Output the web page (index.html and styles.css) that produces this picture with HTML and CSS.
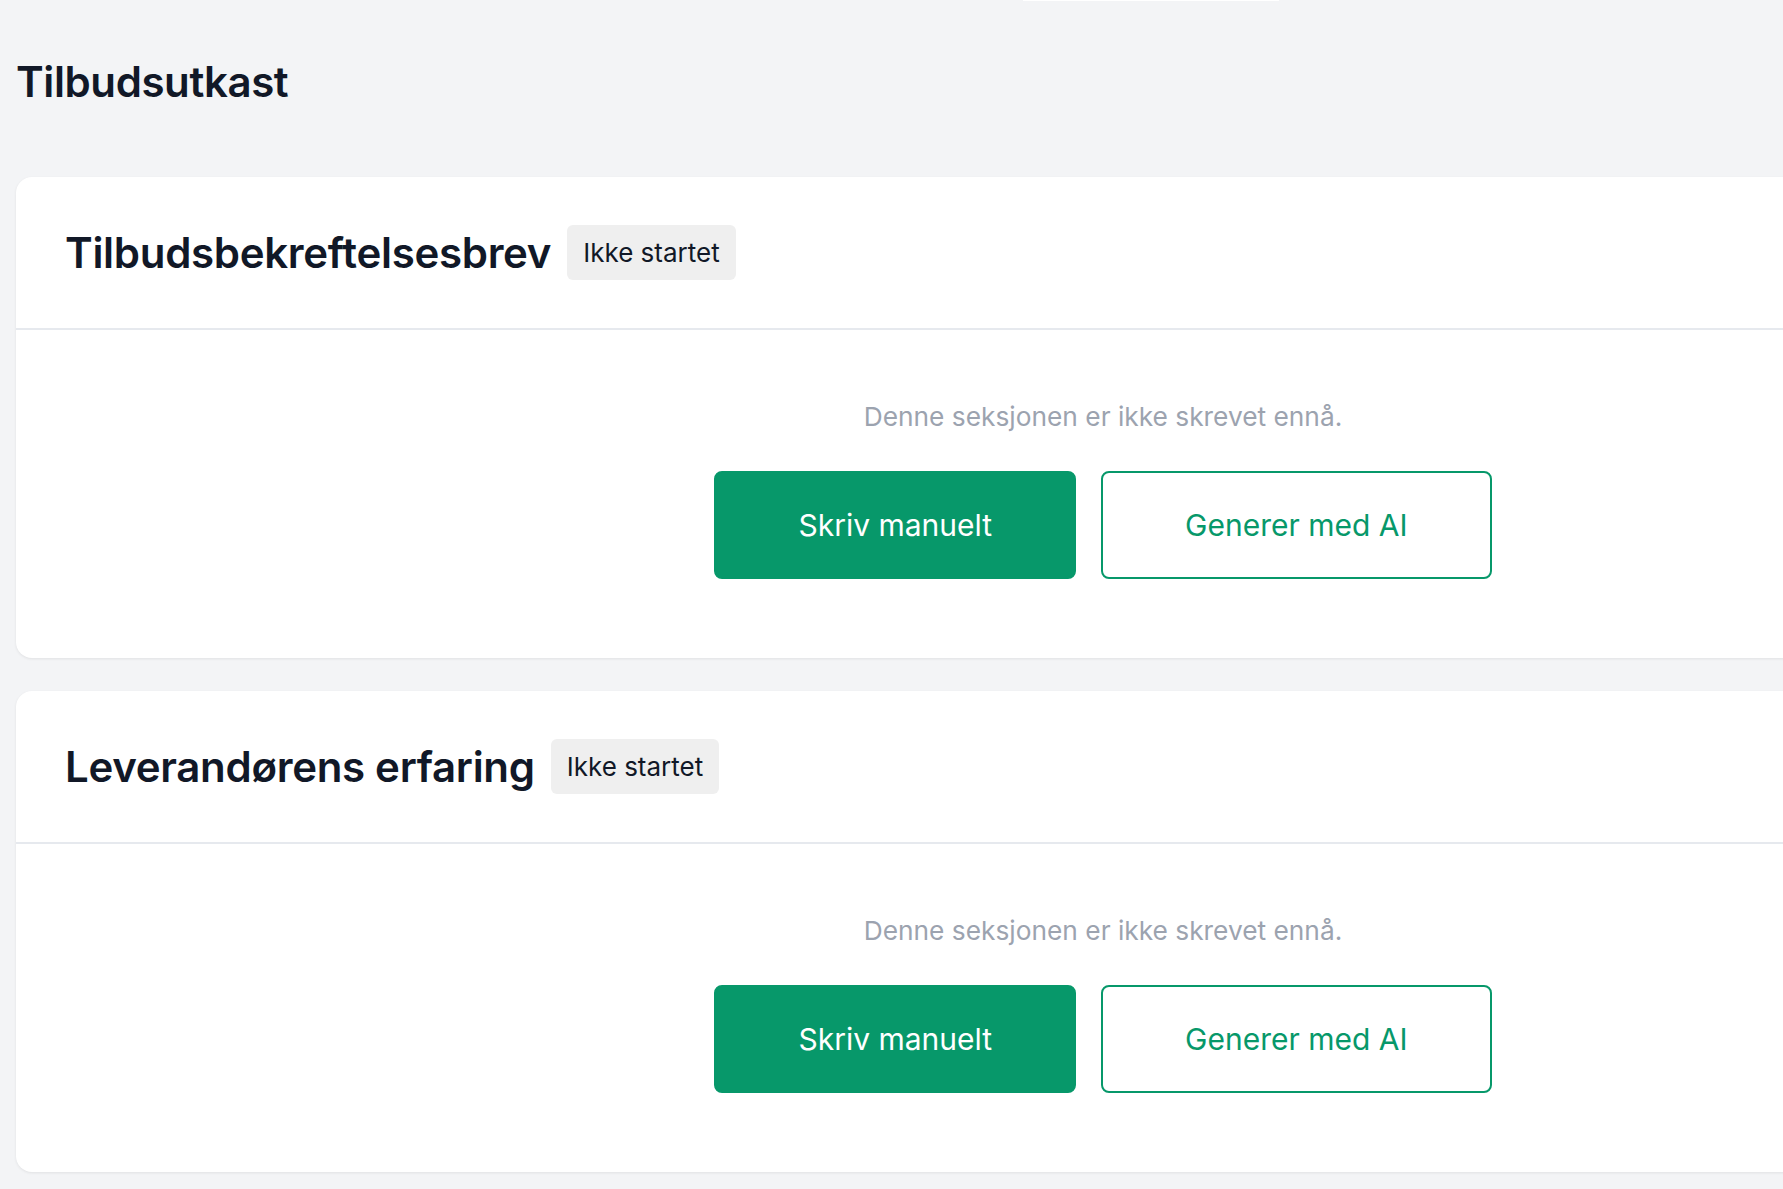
FILE: index.html
```html
<!DOCTYPE html>
<html lang="no">
<head>
  <meta charset="UTF-8">
  <meta name="viewport" content="width=device-width, initial-scale=1.0">
  <title>Tilbudsutkast</title>
  <link rel="stylesheet" href="styles.css">
</head>
<body>

  <div class="top-tab"></div>

  <main class="page">
    <h1>Tilbudsutkast</h1>

    <section class="section-card">
      <div class="section-header">
        <h2>Tilbudsbekreftelsesbrev</h2>
        <span class="status">Ikke startet</span>
      </div>
      <div class="section-body">
        <p class="empty-text">Denne seksjonen er ikke skrevet ennå.</p>
        <div class="actions">
          <button class="btn btn-primary">Skriv manuelt</button>
          <button class="btn btn-outline">Generer med AI</button>
        </div>
      </div>
    </section>

    <section class="section-card">
      <div class="section-header">
        <h2>Leverandørens erfaring</h2>
        <span class="status">Ikke startet</span>
      </div>
      <div class="section-body">
        <p class="empty-text">Denne seksjonen er ikke skrevet ennå.</p>
        <div class="actions">
          <button class="btn btn-primary">Skriv manuelt</button>
          <button class="btn btn-outline">Generer med AI</button>
        </div>
      </div>
    </section>
  </main>

</body>
</html>
```

FILE: styles.css
```css
html {
  overflow: hidden;
}

body {
  font-family: Inter, "Noto Sans", Arial, sans-serif;
  margin: 0;
  padding: 0 16px;
  background-color: #f3f4f6;
  color: #111827;
}

.top-tab {
  width: 256px;
  height: 1px;
  margin-left: 1007px;
  background-color: #ffffff;
}

.page {
  width: 2174px;
}

h1 {
  margin: 55px 0 69px;
  font-size: 42px;
  line-height: 52px;
  font-weight: 600;
  letter-spacing: -0.4px;
}

.section-card {
  background-color: #ffffff;
  border-radius: 16px;
  box-shadow: 0 1px 3px rgba(0, 0, 0, 0.08);
  margin-bottom: 33px;
}

.section-header {
  display: flex;
  align-items: center;
  gap: 16px;
  padding: 48px 49px;
  border-bottom: 2px solid #e6e9ee;
}

.section-header h2 {
  margin: 0;
  font-size: 42px;
  line-height: 54px;
  font-weight: 600;
  letter-spacing: -0.3px;
}

.status {
  background-color: #efefef;
  border-radius: 6px;
  padding: 11px 16px;
  font-size: 26px;
  line-height: 33px;
  color: #111827;
}

.section-body {
  display: flex;
  flex-direction: column;
  align-items: center;
  padding: 69px 0 79px;
}

.empty-text {
  margin: 0 0 36px;
  font-size: 26.3px;
  line-height: 36px;
  color: #9ca3af;
}

.actions {
  display: flex;
  gap: 25px;
}

.btn {
  font-family: inherit;
  font-size: 30px;
  line-height: 36px;
  font-weight: 400;
  padding: 34px 82px;
  border-radius: 8px;
  cursor: pointer;
}

.btn-primary {
  background-color: #07986a;
  border: 2px solid #07986a;
  color: #ffffff;
}

.btn-outline {
  background-color: #ffffff;
  border: 2px solid #07986a;
  color: #07986a;
}
```
